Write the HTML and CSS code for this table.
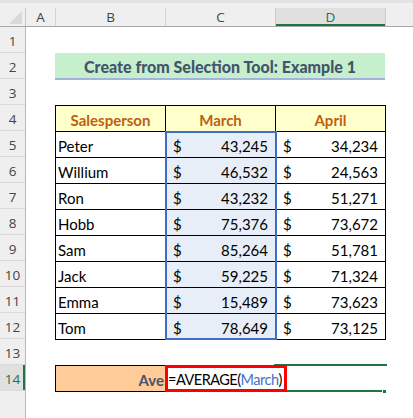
FILE: index.html
```html
<!DOCTYPE html>
<html>
<head>
<meta charset="utf-8">
<link rel="stylesheet" href="styles.css">
</head>
<body>
<div class="app">
  <div class="topstrip"></div>
  <div class="colheads">
    <div class="corner"><svg width="13" height="13" viewBox="0 0 13 13"><polygon points="13,0 13,13 0,13" fill="#d9d9d9"/></svg></div>
    <div class="ch cha">A</div>
    <div class="ch chb">B</div>
    <div class="ch chc">C</div>
    <div class="ch chd active">D</div>
    <div class="ch che"></div>
  </div>
  <div class="body">
    <div class="rowheads">
      <div class="rh">1</div>
      <div class="rh">2</div>
      <div class="rh">3</div>
      <div class="rh">4</div>
      <div class="rh">5</div>
      <div class="rh">6</div>
      <div class="rh">7</div>
      <div class="rh">8</div>
      <div class="rh">9</div>
      <div class="rh">10</div>
      <div class="rh">11</div>
      <div class="rh">12</div>
      <div class="rh">13</div>
      <div class="rh active">14</div>
      <div class="rh-fill"></div>
    </div>
    <div class="sheet">
      <div class="row"></div>
      <div class="row">
        <div class="title">Create from Selection Tool: Example 1</div>
      </div>
      <div class="row"></div>
      <div class="table">
        <div class="th">Salesperson</div>
        <div class="th">March</div>
        <div class="th">April</div>

        <div class="td name">Peter</div>
        <div class="td money selc"><span>$</span><span>43,245</span></div>
        <div class="td money"><span>$</span><span>34,234</span></div>

        <div class="td name">Willium</div>
        <div class="td money selc"><span>$</span><span>46,532</span></div>
        <div class="td money"><span>$</span><span>24,563</span></div>

        <div class="td name">Ron</div>
        <div class="td money selc"><span>$</span><span>43,232</span></div>
        <div class="td money"><span>$</span><span>51,271</span></div>

        <div class="td name">Hobb</div>
        <div class="td money selc"><span>$</span><span>75,376</span></div>
        <div class="td money"><span>$</span><span>73,672</span></div>

        <div class="td name">Sam</div>
        <div class="td money selc"><span>$</span><span>85,264</span></div>
        <div class="td money"><span>$</span><span>51,781</span></div>

        <div class="td name">Jack</div>
        <div class="td money selc"><span>$</span><span>59,225</span></div>
        <div class="td money"><span>$</span><span>71,324</span></div>

        <div class="td name">Emma</div>
        <div class="td money selc"><span>$</span><span>15,489</span></div>
        <div class="td money"><span>$</span><span>73,623</span></div>

        <div class="td name">Tom</div>
        <div class="td money selc"><span>$</span><span>78,649</span></div>
        <div class="td money"><span>$</span><span>73,125</span></div>

        <div class="range-sel"></div>
      </div>
      <div class="row"></div>
      <div class="row r14">
        <div class="avg-label">Ave</div>
        <div class="formula">=AVERAGE(<span class="ref">March</span>)</div>
        <div class="active-cell"><div class="handle"></div></div>
      </div>
    </div>
  </div>
</div>
</body>
</html>
```

FILE: styles.css
```css
* { box-sizing: border-box; }
html, body { margin: 0; padding: 0; }
body {
  width: 413px;
  height: 418px;
  overflow: hidden;
  background: #ffffff;
  font-family: Lato, "Open Sans", sans-serif;
  font-size: 15px;
  color: #000;
}
.app { width: 413px; height: 418px; display: flex; flex-direction: column; }

.topstrip {
  height: 8px;
  background: #f0f0f0;
  border-top: 3px solid #e3e3e3;
}

.colheads {
  height: 19px;
  display: flex;
  background: #efefef;
  border-bottom: 1px solid #a8a8a8;
}
.corner {
  width: 26px;
  border-right: 1px solid #c6c6c6;
  display: flex;
  align-items: flex-end;
  justify-content: flex-end;
  padding: 0 3px 2px 0;
}
.ch {
  border-right: 1px solid #d4d4d4;
  display: flex;
  align-items: center;
  justify-content: center;
  font-family: "Open Sans", sans-serif;
  font-size: 13.5px;
  color: #444;
}
.cha { width: 30px; }
.chb, .chc { width: 110px; }
.chd { width: 110px; }
.che { flex: 1; border-right: none; }
.ch.active {
  background: #e0e0e0;
  color: #217346;
  border-left: 1px solid #c9c9c9;
  border-right: 1px solid #c9c9c9;
  box-shadow: inset 0 -2px 0 #217346;
  margin-left: -1px;
  width: 111px;
}

.body { flex: 1; display: flex; }
.rowheads {
  width: 26px;
  display: flex;
  flex-direction: column;
  background: #efefef;
  border-right: 1px solid #b9b9b9;
}
.rh {
  height: 26px;
  border-bottom: 1px solid #dadada;
  display: flex;
  align-items: center;
  justify-content: center;
  padding-top: 3px;
  font-family: "Open Sans", sans-serif;
  font-size: 13.5px;
  color: #444;
}
.rh.active {
  background: #e0e0e0;
  color: #217346;
  box-shadow: inset -2px 0 0 #217346;
}
.rh-fill { flex: 1; }

.sheet {
  flex: 1;
  display: flex;
  flex-direction: column;
  padding-left: 29px;
}
.row { height: 26px; display: flex; }

.title {
  width: 330px;
  height: 27px;
  margin-bottom: -1px;
  background: #c6efce;
  border-bottom: 2px solid #a3b3db;
  color: #44546a;
  font-weight: 900;
  font-size: 16px;
  display: flex;
  align-items: center;
  justify-content: center;
  padding-top: 2px;
}

.table {
  position: relative;
  width: 331px;
  display: grid;
  grid-template-columns: 109px 109px 109px;
  grid-auto-rows: 25px;
  gap: 1px;
  padding: 1px;
  background: #000;
  margin-bottom: -1px;
}
.th {
  background: #ffffcc;
  color: #c0600f;
  font-weight: bold;
  display: flex;
  align-items: center;
  justify-content: center;
  padding-top: 2px;
}
.td {
  background: #fff;
  display: flex;
  align-items: center;
  padding-top: 2px;
}
.name { padding-left: 2px; }
.money { justify-content: space-between; padding-left: 7px; padding-right: 7px; }
.selc { background: #e8eef8; }

.range-sel {
  position: absolute;
  left: 110px;
  top: 26px;
  width: 112px;
  height: 209px;
  border: 2px solid #3c6fc4;
  pointer-events: none;
}

.r14 { position: relative; height: 27px; }
.avg-label {
  width: 110px;
  height: 27px;
  background: #ffcc99;
  border: 1px solid #000;
  border-right: none;
  color: #44546a;
  font-weight: bold;
  display: flex;
  align-items: center;
  justify-content: flex-end;
  padding-top: 2px;
  padding-right: 1px;
  overflow: hidden;
}
.formula {
  position: relative;
  z-index: 2;
  width: 122px;
  height: 27px;
  border: 3px solid #ff0000;
  background: #fff;
  display: flex;
  align-items: center;
  padding-left: 0;
  padding-top: 1px;
  white-space: nowrap;
  font-size: 14.5px;
  letter-spacing: -0.5px;
}
.ref { color: #4472c4; }
.active-cell {
  position: absolute;
  z-index: 1;
  left: 219px;
  top: -1px;
  width: 113px;
  height: 28px;
  border-top: 2px solid #217346;
  border-bottom: 2px solid #217346;
}
.handle {
  position: absolute;
  right: 0;
  bottom: -4px;
  width: 5px;
  height: 5px;
  background: #217346;
  border: 1px solid #fff;
}
```
